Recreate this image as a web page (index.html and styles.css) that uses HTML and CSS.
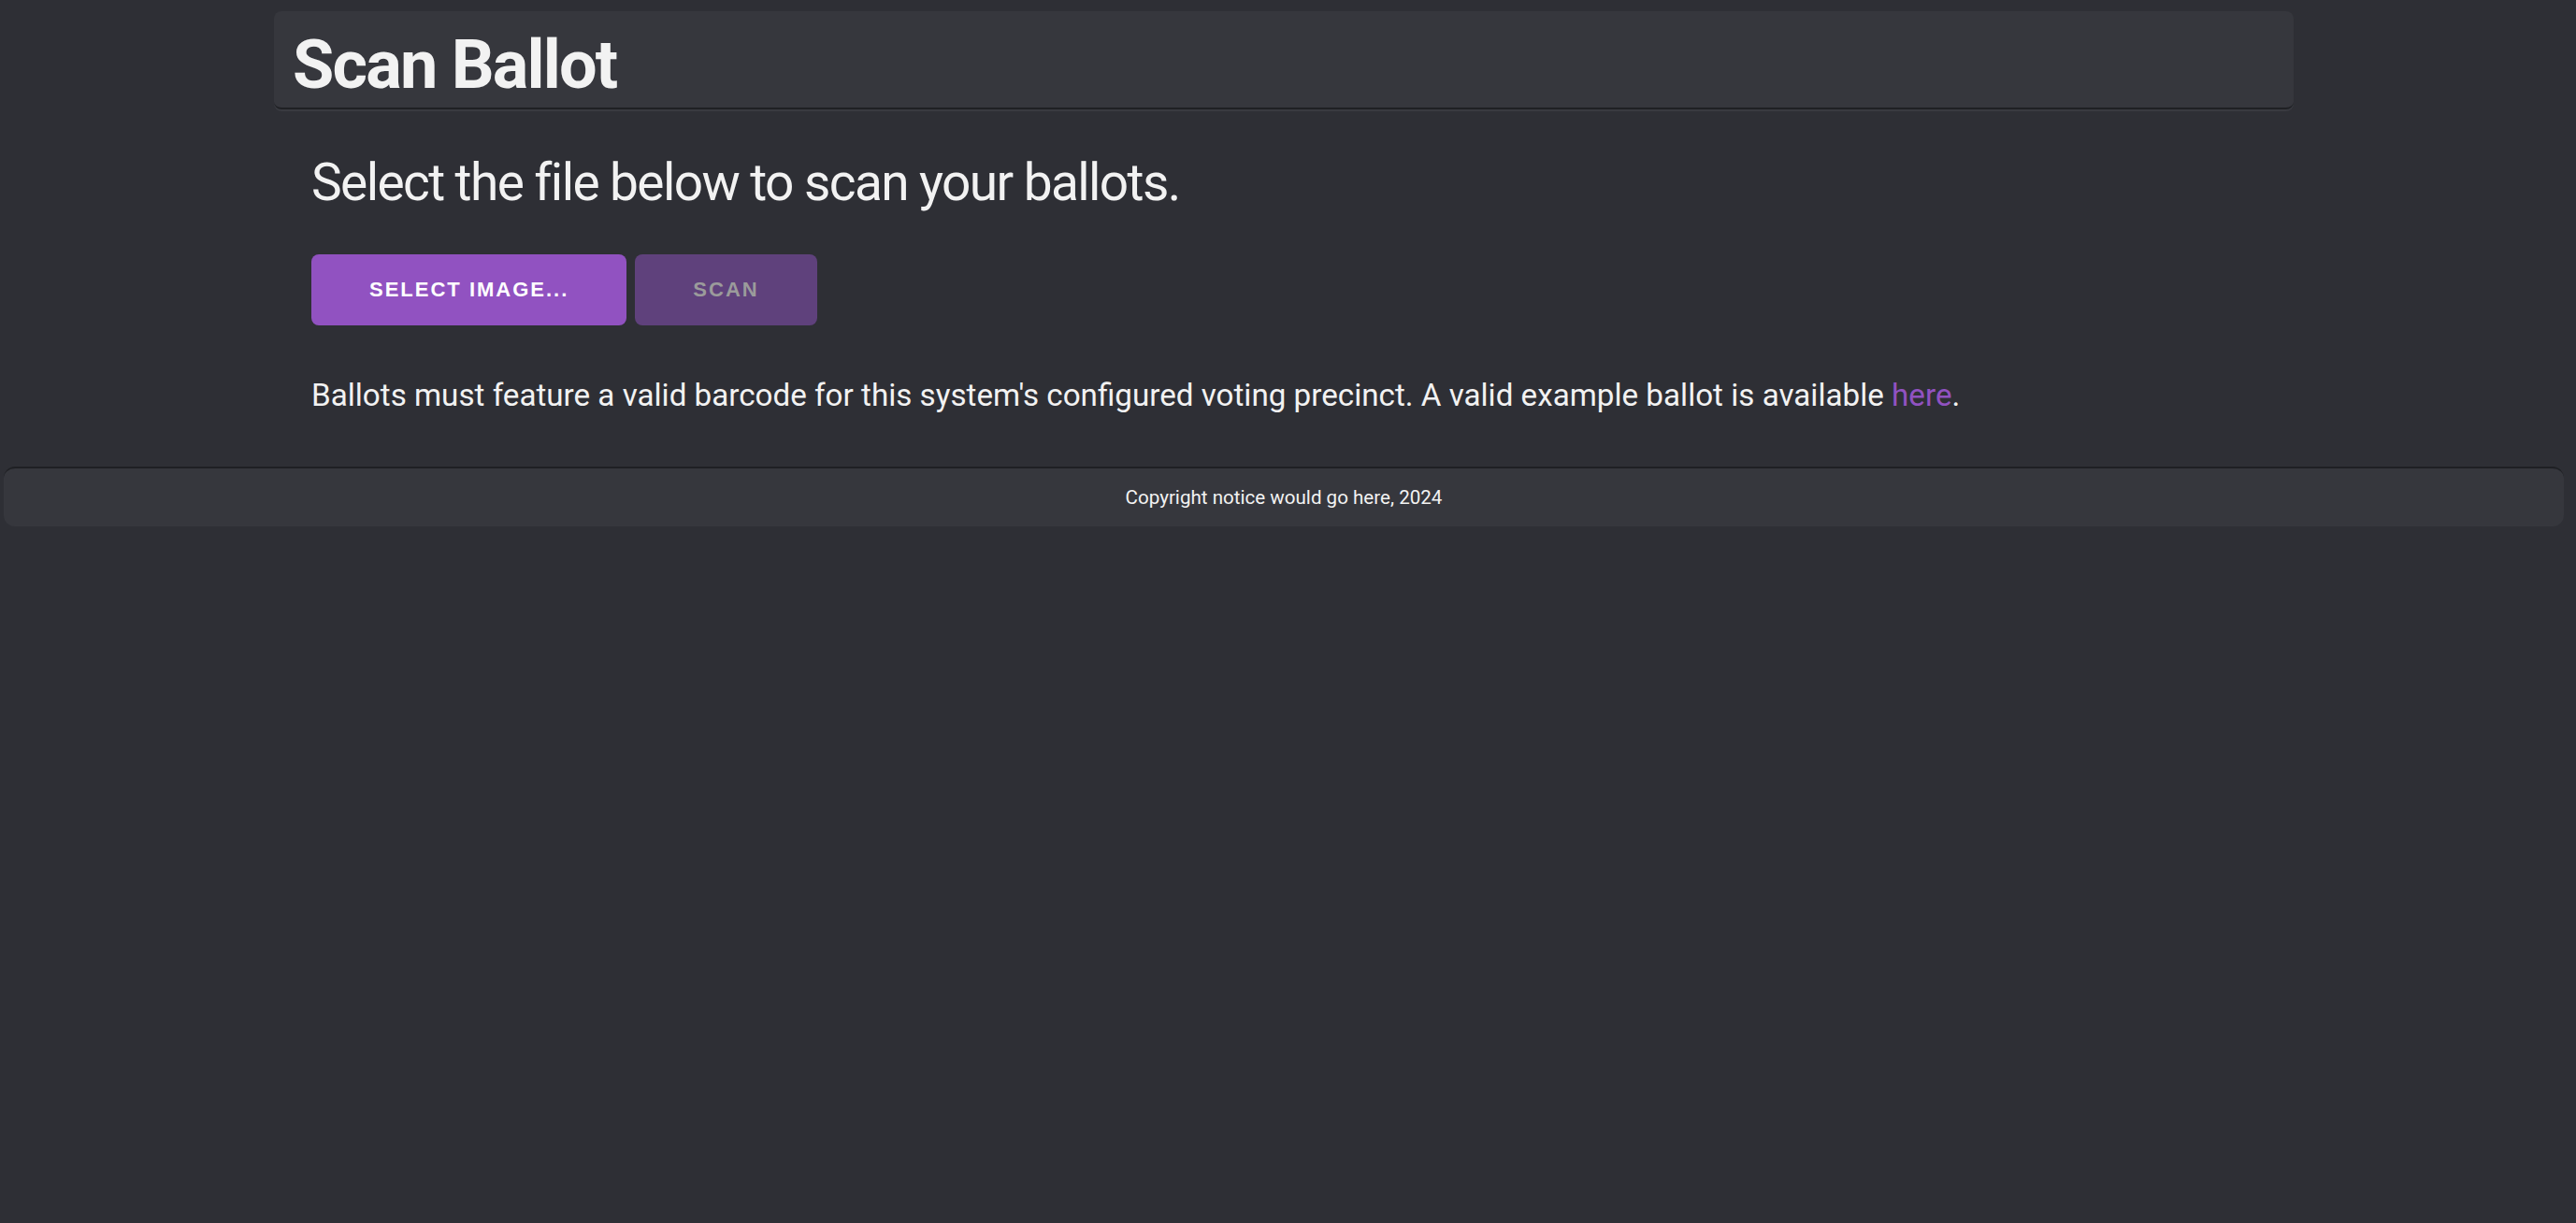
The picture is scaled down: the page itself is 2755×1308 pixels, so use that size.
FILE: index.html
```html
<!DOCTYPE html>
<html lang="en">
<head>
<meta charset="utf-8">
<title>Scan Ballot</title>
<link rel="stylesheet" href="styles.css">
</head>
<body>
<div class="page">
  <header class="topbar">
    <h1 class="title">Scan Ballot</h1>
  </header>
  <main class="content">
    <h2 class="lead">Select the file below to scan your ballots.</h2>
    <div class="actions">
      <button class="btn btn-primary" type="button">Select Image...</button>
      <button class="btn btn-disabled" type="button" disabled>Scan</button>
    </div>
    <p class="note">Ballots must feature a valid barcode for this system's configured voting precinct. A valid example ballot is available <a class="link" href="#">here</a>.</p>
  </main>
  <footer class="footer">Copyright notice would go here, 2024</footer>
</div>
</body>
</html>
```

FILE: styles.css
```css
html, body {
  margin: 0;
  padding: 0;
  background: #2e2f35;
  color: #f2f2f2;
  font-family: Roboto, "Liberation Sans", Arial, sans-serif;
}

.page {
  margin-right: 9px;
  min-height: 1308px;
}

.topbar {
  width: 2160px;
  margin: 12px auto 0;
  box-sizing: border-box;
  background: #36373d;
  border-radius: 8px;
  border-bottom: 2px solid #1f2024;
  box-shadow: 0 2px 0 #393a40;
  padding: 22px 20px 9px;
}

.title {
  margin: 0;
  font-size: 72px;
  line-height: 72px;
  font-weight: 700;
  letter-spacing: -0.025em;
  color: #f2f2f2;
}

.content {
  width: 2160px;
  margin: 0 auto;
  box-sizing: border-box;
  padding: 45px 40px 51px;
}

.lead {
  margin: 0;
  font-size: 55px;
  line-height: 1.2;
  font-weight: 400;
  letter-spacing: -0.029em;
  color: #f2f2f2;
}

.actions {
  display: flex;
  gap: 9px;
  margin-top: 44px;
}

.btn {
  height: 76px;
  padding: 0 62px;
  border: none;
  border-radius: 8px;
  font-family: "Liberation Sans", Arial, sans-serif;
  font-weight: 700;
  font-size: 22px;
  letter-spacing: 2px;
  text-transform: uppercase;
  cursor: pointer;
}

.btn-primary {
  background: #9152c1;
  color: #ffffff;
}

.btn-disabled {
  background: #5f417c;
  color: #9b9b9b;
  cursor: default;
}

.note {
  margin: 50px 0 0;
  font-size: 33.2px;
  line-height: 1.5;
  color: #f2f2f2;
}

.link {
  color: #9152c1;
  text-decoration: none;
}

.footer {
  margin: 0 4px;
  height: 62px;
  line-height: 62px;
  background: #36373d;
  border-top: 2px solid #1f2024;
  border-radius: 12px;
  text-align: center;
  font-size: 20.6px;
  color: #f2f2f2;
}
```
